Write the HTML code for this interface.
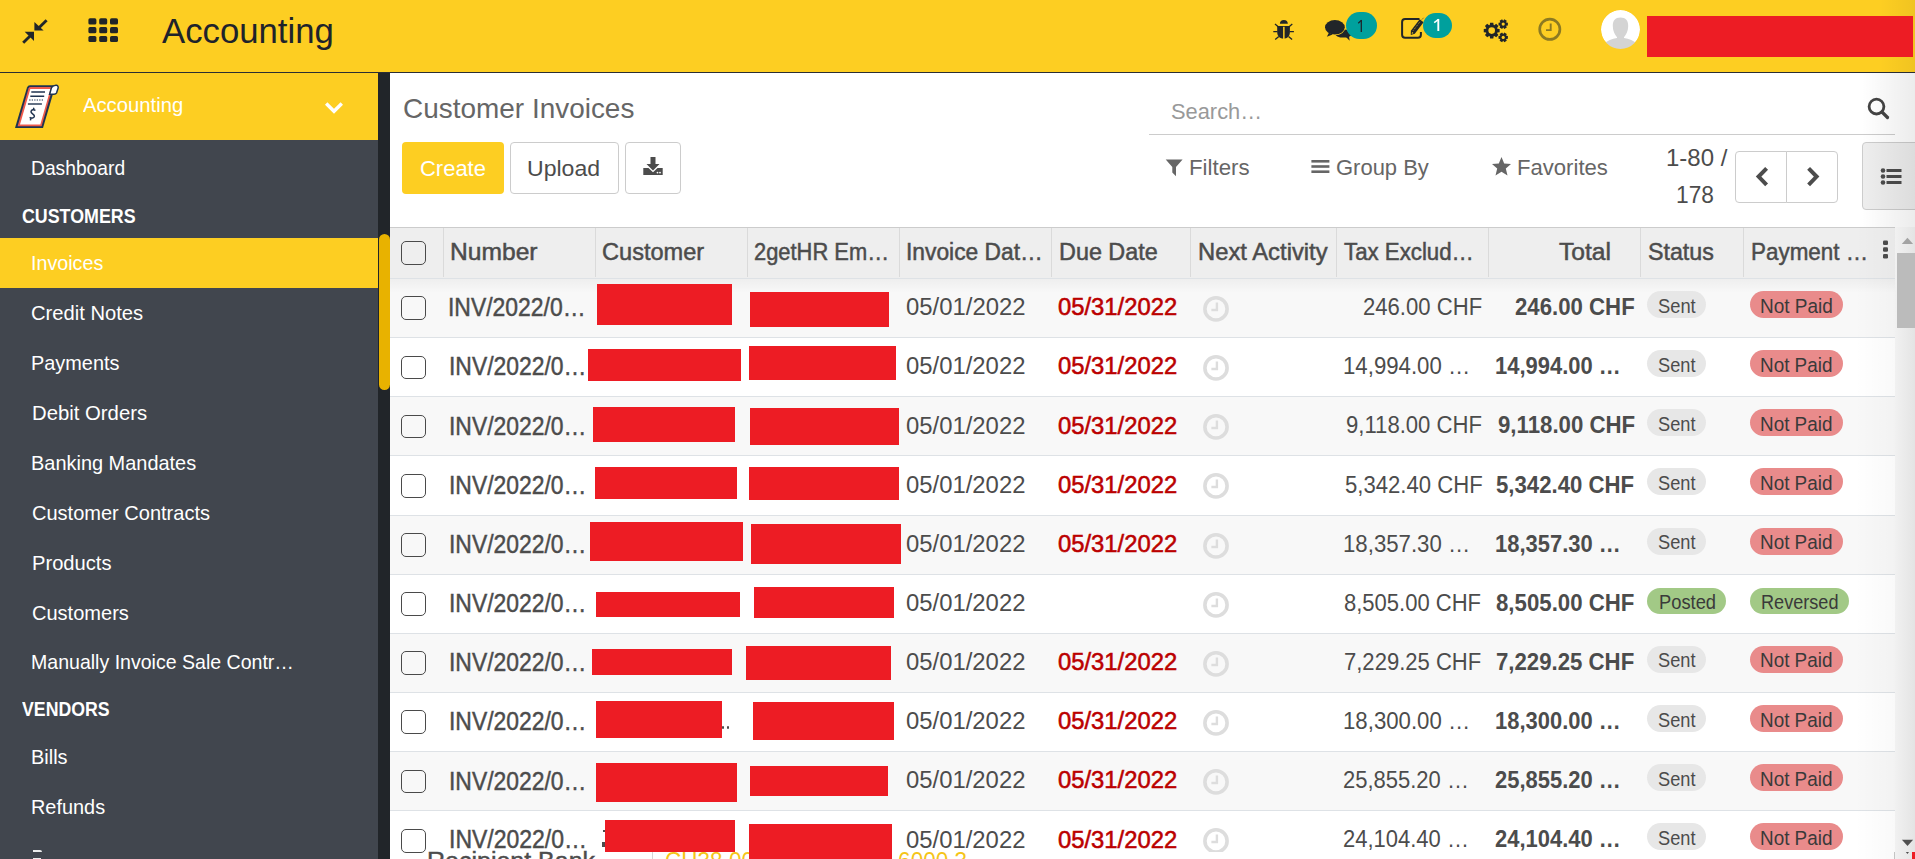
<!DOCTYPE html>
<html><head><meta charset="utf-8"><title>Customer Invoices</title>
<style>
html,body{margin:0;padding:0;width:1915px;height:859px;overflow:hidden;background:#fff;position:relative}
body>div,body>svg{position:absolute}
.t{white-space:nowrap;line-height:1;font-family:"Liberation Sans",sans-serif;transform-origin:0 0}
</style></head><body>
<div style="left:0px;top:0px;width:1915px;height:72px;background:#FDCE22;"></div>
<div style="left:1880px;top:0px;width:35px;height:72px;background:linear-gradient(to right, rgba(0,0,0,0), rgba(0,0,0,0.05));"></div>
<div style="left:0px;top:72px;width:1915px;height:1px;background:#2A2E33;"></div>
<svg style="position:absolute;left:20px;top:17px" width="28" height="29" viewBox="0 0 28 29"><g fill="#212529">
<path d="M25.6 2.2 L27.6 4.2 L20.2 11.6 L18.2 9.6 Z"/>
<path d="M14.4 5 L14.4 13.6 L23.6 13.6 Z"/>
<path d="M4.2 26.8 L2.2 24.8 L9.6 17.4 L11.6 19.4 Z"/>
<path d="M4.7 14.7 L14 14.7 L14 23.9 Z"/></g></svg>
<svg style="position:absolute;left:86px;top:16px" width="36" height="30" viewBox="0 0 36 30"><rect x="2.4" y="2.3" width="8" height="6.2" rx="1.6" fill="#212529"/><rect x="2.4" y="11.1" width="8" height="6.2" rx="1.6" fill="#212529"/><rect x="2.4" y="19.9" width="8" height="6.2" rx="1.6" fill="#212529"/><rect x="13.2" y="2.3" width="8" height="6.2" rx="1.6" fill="#212529"/><rect x="13.2" y="11.1" width="8" height="6.2" rx="1.6" fill="#212529"/><rect x="13.2" y="19.9" width="8" height="6.2" rx="1.6" fill="#212529"/><rect x="24.0" y="2.3" width="8" height="6.2" rx="1.6" fill="#212529"/><rect x="24.0" y="11.1" width="8" height="6.2" rx="1.6" fill="#212529"/><rect x="24.0" y="19.9" width="8" height="6.2" rx="1.6" fill="#212529"/></svg>
<div class="t" style="left:162.16px;top:12.59px;font-size:35.07px;color:#1E232B;transform:scaleX(0.9902)">Accounting</div>
<svg style="position:absolute;left:1270px;top:17px" width="28" height="26" viewBox="0 0 28 26"><g fill="#212529">
<path d="M9.9 6.8 A3.95 3.9 0 0 1 17.8 6.8 Z"/>
<path d="M7.2 9 H19.9 V15 C19.9 19.5 17 21.7 13.55 21.7 C10.1 21.7 7.2 19.5 7.2 15 Z"/>
</g><path d="M5 7 L8.5 10 M22.3 7 L18.8 10 M3.3 14.6 H7.5 M19.7 14.6 H23.9 M5.2 22.6 L8.8 19.5 M22.1 22.6 L18.5 19.5" stroke="#212529" stroke-width="1.3" fill="none"/>
<rect x="13.1" y="9.8" width="1.5" height="12.2" fill="#FDCE22"/></svg>
<svg style="position:absolute;left:1323px;top:17px" width="29" height="26" viewBox="0 0 29 26"><g fill="#212529">
<ellipse cx="20.5" cy="16.6" rx="8.6" ry="4"/>
<path d="M22.5 19.6 L26.7 23.8 L25.8 18.2 Z"/>
</g>
<ellipse cx="11.9" cy="10.3" rx="10.6" ry="7.9" fill="#FDCE22"/>
<g fill="#212529"><ellipse cx="11.9" cy="10.3" rx="9.9" ry="7.2"/>
<path d="M6 15.6 L3.9 19.7 L9.6 17.4 Z"/></g></svg>
<div style="left:1345.6px;top:12.3px;width:31.40000000000009px;height:27.2px;background:#00A09D;border-radius:14px"></div>
<svg style="position:absolute;left:1354px;top:16px" width="14" height="18" viewBox="0 0 14 18"><path d="M7.3 4 V16" stroke="#1E232B" stroke-width="1.3"/><path d="M7.5 4.2 L4.2 7.2" stroke="#1E232B" stroke-width="1.2"/></svg>
<svg style="position:absolute;left:1399px;top:15px" width="29" height="27" viewBox="0 0 29 27"><path d="M20.5 4 H6.1 Q3.1 4 3.1 7 V19.8 Q3.1 22.8 6.1 22.8 H18.9 Q21.9 22.8 21.9 19.8 V17" fill="none" stroke="#212529" stroke-width="2"/>
<path d="M11.8 20 L11.9 15.8 L20.7 4.3 L24.6 7.3 L15.8 18.8 Z" fill="#212529"/>
<path d="M14.2 15.6 L21.3 6.3" stroke="#FDCE22" stroke-width="0.7" stroke-dasharray="1 1"/>
<path d="M12.7 18.9 L13 17 L14.5 18 Z" fill="#FDCE22"/>
<path d="M23 4.4 L24.6 2.8" stroke="#212529" stroke-width="0.9" stroke-dasharray="0.8 0.6"/></svg>
<div style="left:1423.2px;top:12.9px;width:28.700000000000045px;height:25.300000000000004px;background:#00A09D;border-radius:14px"></div>
<svg style="position:absolute;left:1430px;top:16px" width="14" height="18" viewBox="0 0 14 18"><path d="M8.3 3 V15" stroke="#FFFFFF" stroke-width="1.9"/><path d="M8.6 3.3 L4.2 6.6" stroke="#FFFFFF" stroke-width="1.5"/></svg>
<svg style="position:absolute;left:1482px;top:17px" width="30" height="28" viewBox="0 0 30 28"><polygon points="15.38,11.66 17.64,11.99 17.64,15.21 15.38,15.54 15.09,16.24 16.45,18.08 14.18,20.35 12.34,18.99 11.64,19.28 11.31,21.54 8.09,21.54 7.76,19.28 7.06,18.99 5.22,20.35 2.95,18.08 4.31,16.24 4.02,15.54 1.76,15.21 1.76,11.99 4.02,11.66 4.31,10.96 2.95,9.12 5.22,6.85 7.06,8.21 7.76,7.92 8.09,5.66 11.31,5.66 11.64,7.92 12.34,8.21 14.18,6.85 16.45,9.12 15.09,10.96" fill="#212529"/><circle cx="9.7" cy="13.6" r="3.3" fill="#FDCE22"/><polygon points="24.18,5.47 25.88,5.65 25.88,8.55 24.18,8.73 24.10,8.87 24.79,10.43 22.29,11.88 21.28,10.50 21.12,10.50 20.11,11.88 17.61,10.43 18.30,8.87 18.22,8.73 16.52,8.55 16.52,5.65 18.22,5.47 18.30,5.33 17.61,3.77 20.11,2.32 21.12,3.70 21.28,3.70 22.29,2.32 24.79,3.77 24.10,5.33" fill="#212529"/><circle cx="21.2" cy="7.1" r="1.6" fill="#FDCE22"/><polygon points="24.18,18.77 25.88,18.95 25.88,21.85 24.18,22.03 24.10,22.17 24.79,23.73 22.29,25.18 21.28,23.80 21.12,23.80 20.11,25.18 17.61,23.73 18.30,22.17 18.22,22.03 16.52,21.85 16.52,18.95 18.22,18.77 18.30,18.63 17.61,17.07 20.11,15.62 21.12,17.00 21.28,17.00 22.29,15.62 24.79,17.07 24.10,18.63" fill="#212529"/><circle cx="21.2" cy="20.4" r="1.6" fill="#FDCE22"/></svg>
<svg style="position:absolute;left:1536px;top:16px" width="28" height="27" viewBox="0 0 28 27"><circle cx="13.8" cy="13.3" r="10.1" fill="none" stroke="#8C7A22" stroke-width="2.7"/>
<path d="M14.7 7.6 V14.1 H10" fill="none" stroke="#8C7A22" stroke-width="1.9"/></svg>
<svg style="position:absolute;left:1600px;top:9px" width="41" height="41" viewBox="0 0 41 41"><circle cx="20.5" cy="20.5" r="19.5" fill="#FFFFFF"/>
<g fill="#D4D4D4"><path d="M20.5 8.6 C25.8 8.6 28.2 11.6 28.2 17 C28.2 22 26.2 25.6 24 28.2 L24 29 C29 29.6 34 31.6 37 35 L37 42 L4 42 L4 35 C7 31.6 12 29.6 17 29 L17 28.2 C14.8 25.6 12.8 22 12.8 17 C12.8 11.6 15.2 8.6 20.5 8.6 Z"/></g>
<circle cx="20.5" cy="20.5" r="25" fill="none" stroke="#FDCE22" stroke-width="11"/></svg>
<div style="left:1647px;top:16px;width:266px;height:41px;background:#ED1C24;"></div>
<div style="left:0px;top:73px;width:378px;height:786px;background:#41464E;"></div>
<div style="left:0px;top:73px;width:378px;height:67px;background:#FDCE22;"></div>
<div style="left:378px;top:73px;width:12px;height:786px;background:#212529;"></div>
<div style="left:378.5px;top:233.6px;width:11.0px;height:156.20000000000002px;background:#E8B200;border-radius:6px"></div>
<svg style="position:absolute;left:0px;top:72px" width="70" height="68" viewBox="0 72 70 68"><path d="M15 128 L27 87.5 Q27.8 85.2 30 85.2 L55.5 85.2 L43 128 Z" fill="#1F3350"/>
<path d="M17.6 126.3 L28.6 88.3 Q29.2 87 30.6 87 L52.8 87 L41.6 126.3 Z" fill="#EF5B4C"/>
<path d="M20 124.6 L30.3 89 L50.5 89 L40.3 124.6 Z" fill="#FFFFFF"/>
<path d="M51.5 87.5 Q53.5 85 56.5 85.3 Q58.8 86 58 88.5 L56.6 92.8 Q55.8 94.2 54 94.2 L49.6 94.2 Z" fill="#FFFFFF" stroke="#1F3350" stroke-width="1.5"/>
<g stroke="#1F3350" fill="none">
<path d="M31.3 92 H45 M30.3 96.2 H44.2" stroke-width="1.4"/><path d="M29.2 100 H43.3" stroke-width="1.2" stroke-dasharray="1.3 1.2"/><path d="M27.9 104 H41.9" stroke-width="1.4"/>
<path d="M35.4 110.5 C34 109.3 31.3 109.6 31 111.6 C30.7 113.6 34.6 114 34.4 116.3 C34.2 118.3 31.5 118.6 29.6 117.4 M33.9 107.8 L33.4 109.6 M30.9 118.4 L30.4 120.4" stroke-width="1.5"/></g></svg>
<div class="t" style="left:82.50px;top:95.43px;font-size:20.43px;color:#FFFFFF;transform:scaleX(0.9913)">Accounting</div>
<svg style="position:absolute;left:322px;top:99px" width="24" height="18" viewBox="0 0 24 18"><path d="M4.2 4.5 L12 12.3 L19.8 4.5" fill="none" stroke="#FFFFFF" stroke-width="3.4"/></svg>
<div style="left:0px;top:237.8px;width:378px;height:50.0px;background:#FDCE22;"></div>
<div class="t" style="left:31.48px;top:157.85px;font-size:20.29px;color:#FFFFFF;transform:scaleX(0.9484)">Dashboard</div>
<div class="t" style="left:31.11px;top:253.05px;font-size:20.29px;color:#FFFFFF;transform:scaleX(0.9708)">Invoices</div>
<div class="t" style="left:30.99px;top:303.05px;font-size:20.29px;color:#FFFFFF;transform:scaleX(0.9949)">Credit Notes</div>
<div class="t" style="left:31.09px;top:352.65px;font-size:20.29px;color:#FFFFFF;transform:scaleX(0.9808)">Payments</div>
<div class="t" style="left:31.76px;top:402.65px;font-size:20.29px;color:#FFFFFF;transform:scaleX(1.0010)">Debit Orders</div>
<div class="t" style="left:31.08px;top:452.55px;font-size:20.29px;color:#FFFFFF;transform:scaleX(0.9831)">Banking Mandates</div>
<div class="t" style="left:31.68px;top:502.65px;font-size:20.29px;color:#FFFFFF;transform:scaleX(0.9870)">Customer Contracts</div>
<div class="t" style="left:31.77px;top:552.65px;font-size:20.29px;color:#FFFFFF;transform:scaleX(0.9927)">Products</div>
<div class="t" style="left:31.68px;top:602.55px;font-size:20.29px;color:#FFFFFF;transform:scaleX(0.9875)">Customers</div>
<div class="t" style="left:30.62px;top:651.65px;font-size:20.29px;color:#FFFFFF;transform:scaleX(0.9638)">Manually Invoice Sale Contr…</div>
<div class="t" style="left:31.10px;top:746.95px;font-size:20.29px;color:#FFFFFF;transform:scaleX(0.9834)">Bills</div>
<div class="t" style="left:31.11px;top:797.35px;font-size:20.29px;color:#FFFFFF;transform:scaleX(0.9806)">Refunds</div>
<div style="left:33px;top:849.8px;width:9px;height:2.6000000000000227px;background:#FFFFFF;opacity:.9;border-radius:0 2px 0 0"></div>
<div style="left:33px;top:857.6px;width:8px;height:1.3999999999999773px;background:#FFFFFF;opacity:.9"></div>
<div class="t" style="left:21.61px;top:206.28px;font-size:20.72px;color:#FFFFFF;font-weight:bold;transform:scaleX(0.8600)">CUSTOMERS</div>
<div class="t" style="left:22.25px;top:698.24px;font-size:21.01px;color:#FFFFFF;font-weight:bold;transform:scaleX(0.8441)">VENDORS</div>
<div style="left:390px;top:73px;width:1525px;height:786px;background:#FFFFFF;"></div>
<div class="t" style="left:402.80px;top:94.85px;font-size:27.83px;color:#666666;transform:scaleX(1.0041)">Customer Invoices</div>
<div class="t" style="left:1171.36px;top:101.01px;font-size:22.46px;color:#999999;transform:scaleX(0.9726)">Search…</div>
<div style="left:1149px;top:134px;width:746px;height:1px;background:#CCCCCC;"></div>
<svg style="position:absolute;left:1864px;top:94px" width="28" height="28" viewBox="0 0 28 28"><circle cx="12.5" cy="12.6" r="7.4" fill="none" stroke="#444" stroke-width="2.8"/><path d="M18 18 L23.5 23.5" stroke="#444" stroke-width="3.2" stroke-linecap="round"/></svg>
<div style="left:402px;top:142px;width:102px;height:52px;background:#FDCE22;border-radius:4px"></div>
<div class="t" style="left:420.08px;top:158.00px;font-size:21.88px;color:#FFFFFF;transform:scaleX(1.0041)">Create</div>
<div style="left:510px;top:142px;width:109px;height:52px;background:#FFFFFF;border:1px solid #CCCCCC;border-radius:4px;box-sizing:border-box"></div>
<div class="t" style="left:527.41px;top:158.00px;font-size:21.88px;color:#4C4C4C;transform:scaleX(1.0538)">Upload</div>
<div style="left:625px;top:142px;width:56px;height:52px;background:#FFFFFF;border:1px solid #CCCCCC;border-radius:4px;box-sizing:border-box"></div>
<svg style="position:absolute;left:641px;top:154px" width="24" height="24" viewBox="0 0 24 24"><g fill="#4C4C4C"><path d="M9.5 3 H14.5 V10 H18.5 L12 16.5 L5.5 10 H9.5 Z"/>
<path d="M2.3 14 H7.5 L12 18.3 L16.5 14 H21.7 V21 H2.3 Z"/></g>
<circle cx="16.5" cy="18.6" r="0.9" fill="#fff"/><circle cx="19" cy="18.6" r="0.9" fill="#fff"/></svg>
<svg style="position:absolute;left:1164px;top:157px" width="21" height="21" viewBox="0 0 21 21"><path d="M1.7 2.6 H18.6 L12 10 V19.3 L8.3 15.6 V10 Z" fill="#666"/></svg>
<div class="t" style="left:1189.22px;top:156.68px;font-size:22.03px;color:#666666;transform:scaleX(1.0107)">Filters</div>
<svg style="position:absolute;left:1310px;top:158px" width="22" height="19" viewBox="0 0 22 19"><g fill="#666"><rect x="1.4" y="2" width="18" height="2.6"/><rect x="1.4" y="7.2" width="18" height="2.6"/><rect x="1.4" y="12.4" width="18" height="2.6"/></g></svg>
<div class="t" style="left:1336.24px;top:156.68px;font-size:22.03px;color:#666666;transform:scaleX(0.9985)">Group By</div>
<svg style="position:absolute;left:1490px;top:155px" width="23" height="23" viewBox="0 0 23 23"><path d="M11.5 2 L14.2 8.5 L21 9 L15.8 13.4 L17.5 20.5 L11.5 16.7 L5.5 20.5 L7.2 13.4 L2 9 L8.8 8.5 Z" fill="#666"/></svg>
<div class="t" style="left:1517.23px;top:156.94px;font-size:21.59px;color:#666666;transform:scaleX(1.0240)">Favorites</div>
<div class="t" style="left:1665.70px;top:147.32px;font-size:23.64px;color:#4C4C4C;transform:scaleX(1.0154)">1-80 /</div>
<div class="t" style="left:1676.28px;top:184.02px;font-size:23.62px;color:#4C4C4C;transform:scaleX(0.9622)">178</div>
<div style="left:1735px;top:151px;width:52px;height:52px;background:#FFFFFF;border:1px solid #CCCCCC;border-radius:4px 0 0 4px;box-sizing:border-box"></div>
<div style="left:1786px;top:151px;width:52px;height:52px;background:#FFFFFF;border:1px solid #CCCCCC;border-radius:0 4px 4px 0;box-sizing:border-box"></div>
<svg style="position:absolute;left:1750px;top:162px" width="24" height="28" viewBox="0 0 24 28"><path d="M16.6 6.4 L8.6 14.6 L16.6 22.8" fill="none" stroke="#4C4C4C" stroke-width="4"/></svg>
<svg style="position:absolute;left:1801px;top:162px" width="24" height="28" viewBox="0 0 24 28"><path d="M7.6 6.4 L15.6 14.6 L7.6 22.8" fill="none" stroke="#4C4C4C" stroke-width="4"/></svg>
<div style="left:1862px;top:142px;width:63px;height:68px;background:#EEEEEE;border:1px solid #CCCCCC;border-radius:4px;box-sizing:border-box"></div>
<svg style="position:absolute;left:1878px;top:165px" width="27" height="24" viewBox="0 0 27 24"><g fill="#4C4C4C"><circle cx="5" cy="5.5" r="2.3"/><circle cx="5" cy="11.5" r="2.3"/><circle cx="5" cy="17.5" r="2.3"/>
<rect x="8.5" y="4" width="15" height="3"/><rect x="8.5" y="10" width="15" height="3"/><rect x="8.5" y="16" width="15" height="3"/></g></svg>
<div style="left:390px;top:227px;width:1505px;height:51px;background:#EEEEEE;"></div>
<div style="left:390px;top:227px;width:1505px;height:1px;background:#CCCCCC;"></div>
<div style="left:390px;top:278px;width:1505px;height:1px;background:#DEE2E6;"></div>
<div style="left:442.5px;top:228px;width:1.0px;height:49px;background:#DADADA;"></div>
<div style="left:594.5px;top:228px;width:1.0px;height:49px;background:#DADADA;"></div>
<div style="left:746.5px;top:228px;width:1.0px;height:49px;background:#DADADA;"></div>
<div style="left:899.0px;top:228px;width:1.0px;height:49px;background:#DADADA;"></div>
<div style="left:1051.0px;top:228px;width:1.0px;height:49px;background:#DADADA;"></div>
<div style="left:1190.0px;top:228px;width:1.0px;height:49px;background:#DADADA;"></div>
<div style="left:1336.0px;top:228px;width:1.0px;height:49px;background:#DADADA;"></div>
<div style="left:1488.0px;top:228px;width:1.0px;height:49px;background:#DADADA;"></div>
<div style="left:1640.2px;top:228px;width:1.0px;height:49px;background:#DADADA;"></div>
<div style="left:1743.0px;top:228px;width:1.0px;height:49px;background:#DADADA;"></div>
<div style="left:401.3px;top:241.2px;width:24.80000000000001px;height:23.80000000000001px;background:transparent;border:1.8px solid #4a4a4a;border-radius:5px;box-sizing:border-box"></div>
<div class="t" style="left:450.03px;top:240.04px;font-size:24.13px;color:#4C4C4C;-webkit-text-stroke:0.5px #4C4C4C;transform:scaleX(1.0202)">Number</div>
<div class="t" style="left:602.48px;top:239.93px;font-size:24.78px;color:#4C4C4C;-webkit-text-stroke:0.5px #4C4C4C;transform:scaleX(0.9522)">Customer</div>
<div class="t" style="left:754.23px;top:240.04px;font-size:24.13px;color:#4C4C4C;-webkit-text-stroke:0.5px #4C4C4C;transform:scaleX(0.9073)">2getHR Em…</div>
<div class="t" style="left:905.95px;top:241.16px;font-size:23.41px;color:#4C4C4C;-webkit-text-stroke:0.5px #4C4C4C;transform:scaleX(0.9739)">Invoice Dat…</div>
<div class="t" style="left:1058.83px;top:241.16px;font-size:23.41px;color:#4C4C4C;-webkit-text-stroke:0.5px #4C4C4C;transform:scaleX(0.9986)">Due Date</div>
<div class="t" style="left:1198.48px;top:240.04px;font-size:24.13px;color:#4C4C4C;-webkit-text-stroke:0.5px #4C4C4C;transform:scaleX(0.9867)">Next Activity</div>
<div class="t" style="left:1344.39px;top:241.16px;font-size:23.41px;color:#4C4C4C;-webkit-text-stroke:0.5px #4C4C4C;transform:scaleX(0.9509)">Tax Exclud…</div>
<div class="t" style="left:1559.35px;top:241.16px;font-size:23.41px;color:#4C4C4C;-webkit-text-stroke:0.5px #4C4C4C;transform:scaleX(1.0504)">Total</div>
<div class="t" style="left:1647.95px;top:240.04px;font-size:24.13px;color:#4C4C4C;-webkit-text-stroke:0.5px #4C4C4C;transform:scaleX(0.9629)">Status</div>
<div class="t" style="left:1750.90px;top:240.04px;font-size:24.13px;color:#4C4C4C;-webkit-text-stroke:0.5px #4C4C4C;transform:scaleX(0.9299)">Payment …</div>
<svg style="position:absolute;left:1880px;top:238px" width="12" height="23" viewBox="0 0 12 23"><g fill="#4C4C4C"><rect x="3" y="2.5" width="5" height="4.6" rx="1.3"/><rect x="3" y="9.2" width="5" height="4.6" rx="1.3"/><rect x="3" y="15.9" width="5" height="4.6" rx="1.3"/></g></svg>
<div style="left:390px;top:279px;width:1505px;height:58px;background:#F8F8F8;"></div>
<div style="left:390px;top:337px;width:1505px;height:1px;background:#DEE2E6;"></div>
<div style="left:390px;top:338px;width:1505px;height:58px;background:#FFFFFF;"></div>
<div style="left:390px;top:396px;width:1505px;height:1px;background:#DEE2E6;"></div>
<div style="left:390px;top:397px;width:1505px;height:58px;background:#F8F8F8;"></div>
<div style="left:390px;top:455px;width:1505px;height:1px;background:#DEE2E6;"></div>
<div style="left:390px;top:456px;width:1505px;height:59px;background:#FFFFFF;"></div>
<div style="left:390px;top:515px;width:1505px;height:1px;background:#DEE2E6;"></div>
<div style="left:390px;top:516px;width:1505px;height:58px;background:#F8F8F8;"></div>
<div style="left:390px;top:574px;width:1505px;height:1px;background:#DEE2E6;"></div>
<div style="left:390px;top:575px;width:1505px;height:58px;background:#FFFFFF;"></div>
<div style="left:390px;top:633px;width:1505px;height:1px;background:#DEE2E6;"></div>
<div style="left:390px;top:634px;width:1505px;height:58px;background:#F8F8F8;"></div>
<div style="left:390px;top:692px;width:1505px;height:1px;background:#DEE2E6;"></div>
<div style="left:390px;top:693px;width:1505px;height:58px;background:#FFFFFF;"></div>
<div style="left:390px;top:751px;width:1505px;height:1px;background:#DEE2E6;"></div>
<div style="left:390px;top:752px;width:1505px;height:58px;background:#F8F8F8;"></div>
<div style="left:390px;top:810px;width:1505px;height:1px;background:#DEE2E6;"></div>
<div style="left:390px;top:811px;width:1505px;height:59px;background:#FFFFFF;"></div>
<div style="left:390px;top:870px;width:1505px;height:1px;background:#DEE2E6;"></div>
<div style="left:390px;top:279px;width:1505px;height:14px;background:linear-gradient(rgba(0,0,0,0.04),rgba(0,0,0,0));"></div>
<div style="left:401.3px;top:296.4px;width:24.80000000000001px;height:23.80000000000001px;background:transparent;border:1.8px solid #4a4a4a;border-radius:5px;box-sizing:border-box"></div>
<div class="t" style="left:448.42px;top:295.01px;font-size:24.93px;color:#4C4C4C;-webkit-text-stroke:0.45px #4C4C4C;transform:scaleX(0.9196)">INV/2022/0…</div>
<div class="t" style="left:905.52px;top:295.05px;font-size:24.06px;color:#4C4C4C;transform:scaleX(0.9936)">05/01/2022</div>
<div class="t" style="left:1057.75px;top:296.21px;font-size:23.04px;color:#BB0000;-webkit-text-stroke:0.55px #BB0000;transform:scaleX(1.0335)">05/31/2022</div>
<svg style="position:absolute;left:1201px;top:294.0px" width="30" height="30.0" viewBox="0 0 30 30.0"><circle cx="15" cy="14.9" r="11.1" fill="none" stroke="#DDDDDD" stroke-width="3.6"/><path d="M15.9 8.6 V16 H10.4" fill="none" stroke="#DDDDDD" stroke-width="2.4"/></svg>
<div class="t" style="left:1363.05px;top:294.93px;font-size:24.20px;color:#4C4C4C;transform:scaleX(0.9135)">246.00 CHF</div>
<div class="t" style="left:1514.72px;top:294.93px;font-size:24.20px;color:#4C4C4C;font-weight:bold;transform:scaleX(0.9178)">246.00 CHF</div>
<div style="left:1647px;top:291.0px;width:59px;height:27.0px;background:#E7E7E7;border-radius:14px"></div>
<div class="t" style="left:1657.50px;top:297.05px;font-size:19.71px;color:#4C4C4C;transform:scaleX(0.9294)">Sent</div>
<div style="left:1750px;top:291.0px;width:93px;height:27.0px;background:#E98B8B;border-radius:14px"></div>
<div class="t" style="left:1760.18px;top:297.05px;font-size:19.71px;color:#3A3A3A;transform:scaleX(0.9649)">Not Paid</div>
<div style="left:401.3px;top:355.54999999999995px;width:24.80000000000001px;height:23.80000000000001px;background:transparent;border:1.8px solid #4a4a4a;border-radius:5px;box-sizing:border-box"></div>
<div class="t" style="left:448.98px;top:354.16px;font-size:24.93px;color:#4C4C4C;-webkit-text-stroke:0.45px #4C4C4C;transform:scaleX(0.9185)">INV/2022/0…</div>
<div class="t" style="left:906.09px;top:354.20px;font-size:24.06px;color:#4C4C4C;transform:scaleX(0.9924)">05/01/2022</div>
<div class="t" style="left:1057.75px;top:354.20px;font-size:24.06px;color:#BB0000;-webkit-text-stroke:0.55px #BB0000;transform:scaleX(0.9905)">05/31/2022</div>
<svg style="position:absolute;left:1201px;top:353.15px" width="30" height="30.0" viewBox="0 0 30 30.0"><circle cx="15" cy="14.9" r="11.1" fill="none" stroke="#DDDDDD" stroke-width="3.6"/><path d="M15.9 8.6 V16 H10.4" fill="none" stroke="#DDDDDD" stroke-width="2.4"/></svg>
<div class="t" style="left:1342.75px;top:354.08px;font-size:24.20px;color:#4C4C4C;transform:scaleX(0.9184)">14,994.00 …</div>
<div class="t" style="left:1495.26px;top:354.08px;font-size:24.20px;color:#4C4C4C;font-weight:bold;transform:scaleX(0.9074)">14,994.00 …</div>
<div style="left:1647px;top:350.15px;width:59px;height:27.0px;background:#E7E7E7;border-radius:14px"></div>
<div class="t" style="left:1657.64px;top:356.20px;font-size:19.71px;color:#4C4C4C;transform:scaleX(0.9252)">Sent</div>
<div style="left:1750px;top:350.15px;width:93px;height:27.0px;background:#E98B8B;border-radius:14px"></div>
<div class="t" style="left:1760.19px;top:356.20px;font-size:19.71px;color:#3A3A3A;transform:scaleX(0.9588)">Not Paid</div>
<div style="left:401.3px;top:414.7px;width:24.80000000000001px;height:23.80000000000001px;background:transparent;border:1.8px solid #4a4a4a;border-radius:5px;box-sizing:border-box"></div>
<div class="t" style="left:448.98px;top:414.31px;font-size:24.93px;color:#4C4C4C;-webkit-text-stroke:0.45px #4C4C4C;transform:scaleX(0.9185)">INV/2022/0…</div>
<div class="t" style="left:906.09px;top:414.35px;font-size:24.06px;color:#4C4C4C;transform:scaleX(0.9924)">05/01/2022</div>
<div class="t" style="left:1057.75px;top:414.35px;font-size:24.06px;color:#BB0000;-webkit-text-stroke:0.55px #BB0000;transform:scaleX(0.9905)">05/31/2022</div>
<svg style="position:absolute;left:1201px;top:412.3px" width="30" height="30.0" viewBox="0 0 30 30.0"><circle cx="15" cy="14.9" r="11.1" fill="none" stroke="#DDDDDD" stroke-width="3.6"/><path d="M15.9 8.6 V16 H10.4" fill="none" stroke="#DDDDDD" stroke-width="2.4"/></svg>
<div class="t" style="left:1346.34px;top:413.23px;font-size:24.20px;color:#4C4C4C;transform:scaleX(0.9138)">9,118.00 CHF</div>
<div class="t" style="left:1497.60px;top:413.23px;font-size:24.20px;color:#4C4C4C;font-weight:bold;transform:scaleX(0.9192)">9,118.00 CHF</div>
<div style="left:1647px;top:409.3px;width:59px;height:27.0px;background:#E7E7E7;border-radius:14px"></div>
<div class="t" style="left:1657.64px;top:415.35px;font-size:19.71px;color:#4C4C4C;transform:scaleX(0.9252)">Sent</div>
<div style="left:1750px;top:409.3px;width:93px;height:27.0px;background:#E98B8B;border-radius:14px"></div>
<div class="t" style="left:1760.19px;top:415.35px;font-size:19.71px;color:#3A3A3A;transform:scaleX(0.9588)">Not Paid</div>
<div style="left:401.3px;top:473.84999999999997px;width:24.80000000000001px;height:23.80000000000001px;background:transparent;border:1.8px solid #4a4a4a;border-radius:5px;box-sizing:border-box"></div>
<div class="t" style="left:448.98px;top:473.46px;font-size:24.93px;color:#4C4C4C;-webkit-text-stroke:0.45px #4C4C4C;transform:scaleX(0.9185)">INV/2022/0…</div>
<div class="t" style="left:906.09px;top:472.50px;font-size:24.06px;color:#4C4C4C;transform:scaleX(0.9924)">05/01/2022</div>
<div class="t" style="left:1057.75px;top:472.50px;font-size:24.06px;color:#BB0000;-webkit-text-stroke:0.55px #BB0000;transform:scaleX(0.9905)">05/31/2022</div>
<svg style="position:absolute;left:1201px;top:471.45px" width="30" height="30.0" viewBox="0 0 30 30.0"><circle cx="15" cy="14.9" r="11.1" fill="none" stroke="#DDDDDD" stroke-width="3.6"/><path d="M15.9 8.6 V16 H10.4" fill="none" stroke="#DDDDDD" stroke-width="2.4"/></svg>
<div class="t" style="left:1344.56px;top:473.38px;font-size:24.20px;color:#4C4C4C;transform:scaleX(0.9145)">5,342.40 CHF</div>
<div class="t" style="left:1496.04px;top:473.38px;font-size:24.20px;color:#4C4C4C;font-weight:bold;transform:scaleX(0.9167)">5,342.40 CHF</div>
<div style="left:1647px;top:468.45px;width:59px;height:27.0px;background:#E7E7E7;border-radius:14px"></div>
<div class="t" style="left:1657.64px;top:473.50px;font-size:19.71px;color:#4C4C4C;transform:scaleX(0.9252)">Sent</div>
<div style="left:1750px;top:468.45px;width:93px;height:27.0px;background:#E98B8B;border-radius:14px"></div>
<div class="t" style="left:1760.19px;top:473.50px;font-size:19.71px;color:#3A3A3A;transform:scaleX(0.9588)">Not Paid</div>
<div style="left:401.3px;top:533.0px;width:24.80000000000001px;height:23.799999999999955px;background:transparent;border:1.8px solid #4a4a4a;border-radius:5px;box-sizing:border-box"></div>
<div class="t" style="left:448.98px;top:531.61px;font-size:24.93px;color:#4C4C4C;-webkit-text-stroke:0.45px #4C4C4C;transform:scaleX(0.9185)">INV/2022/0…</div>
<div class="t" style="left:906.09px;top:531.65px;font-size:24.06px;color:#4C4C4C;transform:scaleX(0.9924)">05/01/2022</div>
<div class="t" style="left:1057.75px;top:531.65px;font-size:24.06px;color:#BB0000;-webkit-text-stroke:0.55px #BB0000;transform:scaleX(0.9905)">05/31/2022</div>
<svg style="position:absolute;left:1201px;top:530.6px" width="30" height="30.0" viewBox="0 0 30 30.0"><circle cx="15" cy="14.9" r="11.1" fill="none" stroke="#DDDDDD" stroke-width="3.6"/><path d="M15.9 8.6 V16 H10.4" fill="none" stroke="#DDDDDD" stroke-width="2.4"/></svg>
<div class="t" style="left:1342.75px;top:531.53px;font-size:24.20px;color:#4C4C4C;transform:scaleX(0.9184)">18,357.30 …</div>
<div class="t" style="left:1495.26px;top:531.53px;font-size:24.20px;color:#4C4C4C;font-weight:bold;transform:scaleX(0.9074)">18,357.30 …</div>
<div style="left:1647px;top:527.6px;width:59px;height:27.0px;background:#E7E7E7;border-radius:14px"></div>
<div class="t" style="left:1657.64px;top:532.65px;font-size:19.71px;color:#4C4C4C;transform:scaleX(0.9252)">Sent</div>
<div style="left:1750px;top:527.6px;width:93px;height:27.0px;background:#E98B8B;border-radius:14px"></div>
<div class="t" style="left:1760.19px;top:532.65px;font-size:19.71px;color:#3A3A3A;transform:scaleX(0.9588)">Not Paid</div>
<div style="left:401.3px;top:592.15px;width:24.80000000000001px;height:23.799999999999955px;background:transparent;border:1.8px solid #4a4a4a;border-radius:5px;box-sizing:border-box"></div>
<div class="t" style="left:448.98px;top:590.76px;font-size:24.93px;color:#4C4C4C;-webkit-text-stroke:0.45px #4C4C4C;transform:scaleX(0.9185)">INV/2022/0…</div>
<div class="t" style="left:906.09px;top:590.80px;font-size:24.06px;color:#4C4C4C;transform:scaleX(0.9924)">05/01/2022</div>
<svg style="position:absolute;left:1201px;top:589.75px" width="30" height="30.0" viewBox="0 0 30 30.0"><circle cx="15" cy="14.9" r="11.1" fill="none" stroke="#DDDDDD" stroke-width="3.6"/><path d="M15.9 8.6 V16 H10.4" fill="none" stroke="#DDDDDD" stroke-width="2.4"/></svg>
<div class="t" style="left:1344.49px;top:590.68px;font-size:24.20px;color:#4C4C4C;transform:scaleX(0.9103)">8,505.00 CHF</div>
<div class="t" style="left:1495.65px;top:590.68px;font-size:24.20px;color:#4C4C4C;font-weight:bold;transform:scaleX(0.9193)">8,505.00 CHF</div>
<div style="left:1647px;top:587.75px;width:78.79999999999995px;height:26.700000000000045px;background:#A2C986;border-radius:14px"></div>
<div class="t" style="left:1658.77px;top:592.52px;font-size:19.57px;color:#3A3A3A;transform:scaleX(0.9362)">Posted</div>
<div style="left:1750px;top:587.75px;width:98.79999999999995px;height:26.700000000000045px;background:#A2C986;border-radius:14px"></div>
<div class="t" style="left:1760.75px;top:592.52px;font-size:19.57px;color:#3A3A3A;transform:scaleX(0.9252)">Reversed</div>
<div style="left:401.3px;top:651.3px;width:24.80000000000001px;height:23.799999999999955px;background:transparent;border:1.8px solid #4a4a4a;border-radius:5px;box-sizing:border-box"></div>
<div class="t" style="left:448.98px;top:649.91px;font-size:24.93px;color:#4C4C4C;-webkit-text-stroke:0.45px #4C4C4C;transform:scaleX(0.9185)">INV/2022/0…</div>
<div class="t" style="left:906.09px;top:649.95px;font-size:24.06px;color:#4C4C4C;transform:scaleX(0.9924)">05/01/2022</div>
<div class="t" style="left:1057.75px;top:649.95px;font-size:24.06px;color:#BB0000;-webkit-text-stroke:0.55px #BB0000;transform:scaleX(0.9905)">05/31/2022</div>
<svg style="position:absolute;left:1201px;top:648.9px" width="30" height="30.0" viewBox="0 0 30 30.0"><circle cx="15" cy="14.9" r="11.1" fill="none" stroke="#DDDDDD" stroke-width="3.6"/><path d="M15.9 8.6 V16 H10.4" fill="none" stroke="#DDDDDD" stroke-width="2.4"/></svg>
<div class="t" style="left:1344.41px;top:649.83px;font-size:24.20px;color:#4C4C4C;transform:scaleX(0.9109)">7,229.25 CHF</div>
<div class="t" style="left:1495.89px;top:649.83px;font-size:24.20px;color:#4C4C4C;font-weight:bold;transform:scaleX(0.9178)">7,229.25 CHF</div>
<div style="left:1647px;top:645.9px;width:59px;height:27.0px;background:#E7E7E7;border-radius:14px"></div>
<div class="t" style="left:1657.64px;top:650.95px;font-size:19.71px;color:#4C4C4C;transform:scaleX(0.9252)">Sent</div>
<div style="left:1750px;top:645.9px;width:93px;height:27.0px;background:#E98B8B;border-radius:14px"></div>
<div class="t" style="left:1760.19px;top:650.95px;font-size:19.71px;color:#3A3A3A;transform:scaleX(0.9588)">Not Paid</div>
<div style="left:401.3px;top:710.4499999999999px;width:24.80000000000001px;height:23.799999999999955px;background:transparent;border:1.8px solid #4a4a4a;border-radius:5px;box-sizing:border-box"></div>
<div class="t" style="left:448.98px;top:709.06px;font-size:24.93px;color:#4C4C4C;-webkit-text-stroke:0.45px #4C4C4C;transform:scaleX(0.9185)">INV/2022/0…</div>
<div class="t" style="left:906.09px;top:709.10px;font-size:24.06px;color:#4C4C4C;transform:scaleX(0.9924)">05/01/2022</div>
<div class="t" style="left:1057.75px;top:709.10px;font-size:24.06px;color:#BB0000;-webkit-text-stroke:0.55px #BB0000;transform:scaleX(0.9905)">05/31/2022</div>
<svg style="position:absolute;left:1201px;top:708.05px" width="30" height="30.0" viewBox="0 0 30 30.0"><circle cx="15" cy="14.9" r="11.1" fill="none" stroke="#DDDDDD" stroke-width="3.6"/><path d="M15.9 8.6 V16 H10.4" fill="none" stroke="#DDDDDD" stroke-width="2.4"/></svg>
<div class="t" style="left:1342.75px;top:708.98px;font-size:24.20px;color:#4C4C4C;transform:scaleX(0.9184)">18,300.00 …</div>
<div class="t" style="left:1495.26px;top:708.98px;font-size:24.20px;color:#4C4C4C;font-weight:bold;transform:scaleX(0.9074)">18,300.00 …</div>
<div style="left:1647px;top:705.05px;width:59px;height:27.0px;background:#E7E7E7;border-radius:14px"></div>
<div class="t" style="left:1657.64px;top:711.10px;font-size:19.71px;color:#4C4C4C;transform:scaleX(0.9252)">Sent</div>
<div style="left:1750px;top:705.05px;width:93px;height:27.0px;background:#E98B8B;border-radius:14px"></div>
<div class="t" style="left:1760.19px;top:711.10px;font-size:19.71px;color:#3A3A3A;transform:scaleX(0.9588)">Not Paid</div>
<div style="left:401.3px;top:769.6px;width:24.80000000000001px;height:23.799999999999955px;background:transparent;border:1.8px solid #4a4a4a;border-radius:5px;box-sizing:border-box"></div>
<div class="t" style="left:448.98px;top:769.21px;font-size:24.93px;color:#4C4C4C;-webkit-text-stroke:0.45px #4C4C4C;transform:scaleX(0.9185)">INV/2022/0…</div>
<div class="t" style="left:906.09px;top:768.25px;font-size:24.06px;color:#4C4C4C;transform:scaleX(0.9924)">05/01/2022</div>
<div class="t" style="left:1057.75px;top:768.25px;font-size:24.06px;color:#BB0000;-webkit-text-stroke:0.55px #BB0000;transform:scaleX(0.9905)">05/31/2022</div>
<svg style="position:absolute;left:1201px;top:767.2px" width="30" height="30.0" viewBox="0 0 30 30.0"><circle cx="15" cy="14.9" r="11.1" fill="none" stroke="#DDDDDD" stroke-width="3.6"/><path d="M15.9 8.6 V16 H10.4" fill="none" stroke="#DDDDDD" stroke-width="2.4"/></svg>
<div class="t" style="left:1343.32px;top:768.13px;font-size:24.20px;color:#4C4C4C;transform:scaleX(0.9090)">25,855.20 …</div>
<div class="t" style="left:1495.11px;top:768.13px;font-size:24.20px;color:#4C4C4C;font-weight:bold;transform:scaleX(0.9085)">25,855.20 …</div>
<div style="left:1647px;top:764.2px;width:59px;height:27.0px;background:#E7E7E7;border-radius:14px"></div>
<div class="t" style="left:1657.64px;top:770.25px;font-size:19.71px;color:#4C4C4C;transform:scaleX(0.9252)">Sent</div>
<div style="left:1750px;top:764.2px;width:93px;height:27.0px;background:#E98B8B;border-radius:14px"></div>
<div class="t" style="left:1760.19px;top:770.25px;font-size:19.71px;color:#3A3A3A;transform:scaleX(0.9588)">Not Paid</div>
<div style="left:401.3px;top:828.75px;width:24.80000000000001px;height:23.799999999999955px;background:transparent;border:1.8px solid #4a4a4a;border-radius:5px;box-sizing:border-box"></div>
<div class="t" style="left:448.83px;top:827.36px;font-size:24.93px;color:#4C4C4C;-webkit-text-stroke:0.45px #4C4C4C;transform:scaleX(0.9224)">INV/2022/0…</div>
<div class="t" style="left:906.09px;top:828.40px;font-size:24.06px;color:#4C4C4C;transform:scaleX(0.9924)">05/01/2022</div>
<div class="t" style="left:1057.75px;top:828.40px;font-size:24.06px;color:#BB0000;-webkit-text-stroke:0.55px #BB0000;transform:scaleX(0.9905)">05/31/2022</div>
<svg style="position:absolute;left:1201px;top:826.35px" width="30" height="30.0" viewBox="0 0 30 30.0"><circle cx="15" cy="14.9" r="11.1" fill="none" stroke="#DDDDDD" stroke-width="3.6"/><path d="M15.9 8.6 V16 H10.4" fill="none" stroke="#DDDDDD" stroke-width="2.4"/></svg>
<div class="t" style="left:1343.32px;top:827.28px;font-size:24.20px;color:#4C4C4C;transform:scaleX(0.9090)">24,104.40 …</div>
<div class="t" style="left:1495.11px;top:827.28px;font-size:24.20px;color:#4C4C4C;font-weight:bold;transform:scaleX(0.9085)">24,104.40 …</div>
<div style="left:1647px;top:823.35px;width:59px;height:27.0px;background:#E7E7E7;border-radius:14px"></div>
<div class="t" style="left:1657.64px;top:829.40px;font-size:19.71px;color:#4C4C4C;transform:scaleX(0.9252)">Sent</div>
<div style="left:1750px;top:823.35px;width:93px;height:27.0px;background:#E98B8B;border-radius:14px"></div>
<div class="t" style="left:1760.19px;top:829.40px;font-size:19.71px;color:#3A3A3A;transform:scaleX(0.9588)">Not Paid</div>
<div style="left:428px;top:852px;width:1466px;height:7px;background:#FFFFFF;"></div>
<div style="left:652px;top:852px;width:1px;height:7px;background:#D5D5D5;"></div>
<div class="t" style="left:427.40px;top:849.46px;font-size:24.64px;color:#4C4C4C;-webkit-text-stroke:0.45px #4C4C4C;transform:scaleX(1.0146)">Recipient Bank</div>
<div class="t" style="left:665.47px;top:848.56px;font-size:24.64px;color:#F5C518;transform:scaleX(0.9154)">CH38 0000 0000 0000 6000 3</div>
<div style="left:721.5px;top:726px;width:2.5px;height:2.5px;background:#4C4C4C;border-radius:50%"></div>
<div style="left:726.5px;top:726px;width:2.5px;height:2.5px;background:#4C4C4C;border-radius:50%"></div>
<div style="left:602.6px;top:830px;width:2.3999999999999773px;height:2px;background:#4C4C4C;"></div>
<div style="left:602px;top:842px;width:3px;height:5px;background:#4C4C4C;"></div>
<div style="left:597px;top:284px;width:135px;height:41px;background:#ED1C24;"></div>
<div style="left:750px;top:292px;width:139px;height:35px;background:#ED1C24;"></div>
<div style="left:588px;top:349px;width:153px;height:32px;background:#ED1C24;"></div>
<div style="left:749px;top:346px;width:147px;height:34px;background:#ED1C24;"></div>
<div style="left:593px;top:407px;width:142px;height:35px;background:#ED1C24;"></div>
<div style="left:750px;top:408px;width:149px;height:37px;background:#ED1C24;"></div>
<div style="left:595px;top:467px;width:142px;height:32px;background:#ED1C24;"></div>
<div style="left:749px;top:467px;width:150px;height:33px;background:#ED1C24;"></div>
<div style="left:590px;top:522px;width:153px;height:39px;background:#ED1C24;"></div>
<div style="left:751px;top:524px;width:150px;height:40px;background:#ED1C24;"></div>
<div style="left:596px;top:592px;width:144px;height:25px;background:#ED1C24;"></div>
<div style="left:754px;top:587px;width:140px;height:31px;background:#ED1C24;"></div>
<div style="left:592px;top:649px;width:140px;height:26px;background:#ED1C24;"></div>
<div style="left:746px;top:646px;width:145px;height:34px;background:#ED1C24;"></div>
<div style="left:596px;top:701px;width:126px;height:37px;background:#ED1C24;"></div>
<div style="left:753px;top:702px;width:141px;height:38px;background:#ED1C24;"></div>
<div style="left:596px;top:763px;width:141px;height:39px;background:#ED1C24;"></div>
<div style="left:750px;top:766px;width:138px;height:30px;background:#ED1C24;"></div>
<div style="left:605px;top:820px;width:130px;height:32px;background:#ED1C24;"></div>
<div style="left:749px;top:824px;width:143px;height:35px;background:#ED1C24;"></div>
<div style="left:1895px;top:227px;width:20px;height:632px;background:linear-gradient(to right,#F1F1F1,#E4E4E4);"></div>
<svg style="position:absolute;left:1897px;top:230px" width="20" height="20" viewBox="0 0 20 20"><path d="M4.8 14 L16.1 14 L10.45 7.7 Z" fill="#A3A3A3"/></svg>
<div style="left:1897px;top:253px;width:18px;height:74.5px;background:#BBBBBB;"></div>
<svg style="position:absolute;left:1895px;top:832px" width="20" height="27" viewBox="0 0 20 27"><path d="M6.9 7.8 L18.1 7.8 L12.5 14 Z" fill="#505050"/><path d="M10.8 19.9 L14 19.9 L12.4 21.9 Z" fill="#505050"/></svg>
<div style="left:1912px;top:852px;width:3px;height:7px;background:#ED1C24;"></div>
<div style="left:1894px;top:852px;width:1px;height:7px;background:#C8C8C8;"></div>
<div style="left:1855px;top:227px;width:40px;height:632px;background:linear-gradient(to right, rgba(0,0,0,0), rgba(0,0,0,0.025));"></div>
<div style="left:1862px;top:73px;width:53px;height:154px;background:linear-gradient(to right, rgba(0,0,0,0), rgba(0,0,0,0.075));"></div>
</body></html>
